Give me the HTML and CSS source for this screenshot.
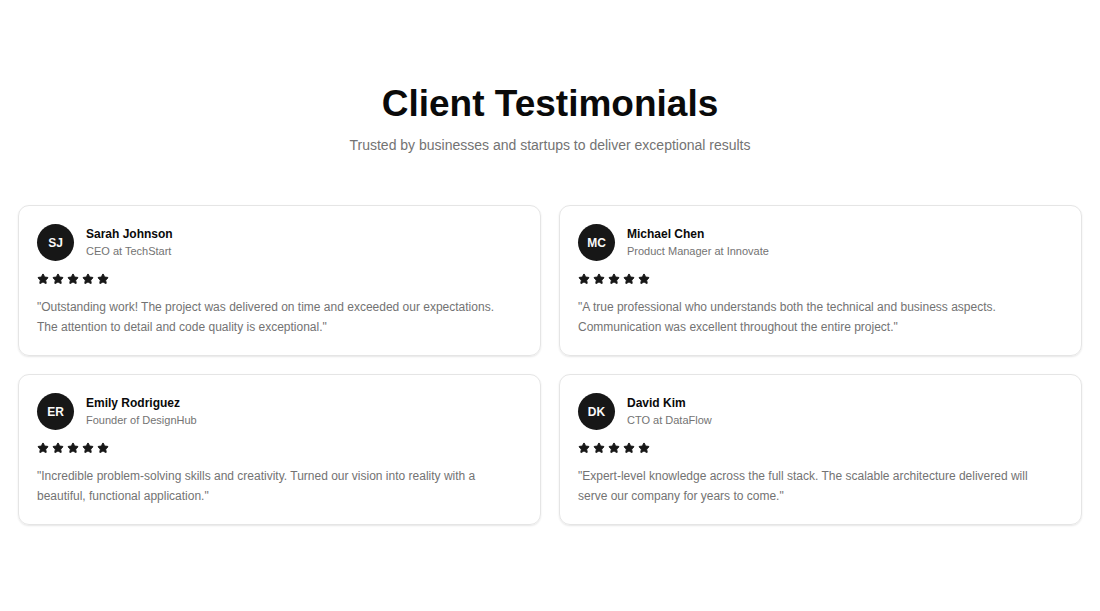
FILE: index.html
```html
<!DOCTYPE html>
<html lang="en">
<head>
  <meta charset="UTF-8">
  <meta name="viewport" content="width=device-width, initial-scale=1.0">
  <title>Client Testimonials</title>
  <link rel="stylesheet" href="styles.css">
</head>
<body>
  <svg class="sprite" aria-hidden="true">
    <symbol id="star" viewBox="0 0 24 24">
      <path d="M11.525 2.295a.53.53 0 0 1 .95 0l2.31 4.679a2.123 2.123 0 0 0 1.595 1.16l5.166.756a.53.53 0 0 1 .294.904l-3.736 3.638a2.123 2.123 0 0 0-.611 1.878l.882 5.14a.53.53 0 0 1-.771.56l-4.618-2.428a2.122 2.122 0 0 0-1.973 0L6.396 21.01a.53.53 0 0 1-.77-.56l.881-5.139a2.122 2.122 0 0 0-.611-1.879L2.16 9.795a.53.53 0 0 1 .294-.906l5.165-.755a2.122 2.122 0 0 0 1.597-1.16z"/>
    </symbol>
  </svg>

  <section class="testimonials">
    <div class="heading">
      <h2>Client Testimonials</h2>
      <p>Trusted by businesses and startups to deliver exceptional results</p>
    </div>

    <div class="grid">
      <div class="card">
        <div class="person">
          <div class="avatar">SJ</div>
          <div>
            <h3>Sarah Johnson</h3>
            <p class="role">CEO at TechStart</p>
          </div>
        </div>
        <div class="stars" role="img" aria-label="5 out of 5 stars">
          <svg><use href="#star"/></svg>
          <svg><use href="#star"/></svg>
          <svg><use href="#star"/></svg>
          <svg><use href="#star"/></svg>
          <svg><use href="#star"/></svg>
        </div>
        <p class="quote">"Outstanding work! The project was delivered on time and exceeded our expectations. The attention to detail and code quality is exceptional."</p>
      </div>

      <div class="card">
        <div class="person">
          <div class="avatar">MC</div>
          <div>
            <h3>Michael Chen</h3>
            <p class="role">Product Manager at Innovate</p>
          </div>
        </div>
        <div class="stars" role="img" aria-label="5 out of 5 stars">
          <svg><use href="#star"/></svg>
          <svg><use href="#star"/></svg>
          <svg><use href="#star"/></svg>
          <svg><use href="#star"/></svg>
          <svg><use href="#star"/></svg>
        </div>
        <p class="quote">"A true professional who understands both the technical and business aspects. Communication was excellent throughout the entire project."</p>
      </div>

      <div class="card">
        <div class="person">
          <div class="avatar">ER</div>
          <div>
            <h3>Emily Rodriguez</h3>
            <p class="role">Founder of DesignHub</p>
          </div>
        </div>
        <div class="stars" role="img" aria-label="5 out of 5 stars">
          <svg><use href="#star"/></svg>
          <svg><use href="#star"/></svg>
          <svg><use href="#star"/></svg>
          <svg><use href="#star"/></svg>
          <svg><use href="#star"/></svg>
        </div>
        <p class="quote">"Incredible problem-solving skills and creativity. Turned our vision into reality with a beautiful, functional application."</p>
      </div>

      <div class="card">
        <div class="person">
          <div class="avatar">DK</div>
          <div>
            <h3>David Kim</h3>
            <p class="role">CTO at DataFlow</p>
          </div>
        </div>
        <div class="stars" role="img" aria-label="5 out of 5 stars">
          <svg><use href="#star"/></svg>
          <svg><use href="#star"/></svg>
          <svg><use href="#star"/></svg>
          <svg><use href="#star"/></svg>
          <svg><use href="#star"/></svg>
        </div>
        <p class="quote">"Expert-level knowledge across the full stack. The scalable architecture delivered will serve our company for years to come."</p>
      </div>
    </div>
  </section>
</body>
</html>
```
FILE: styles.css
```css
* {
  box-sizing: border-box;
}
body {
  margin: 0;
  font-family: "Liberation Sans", Arial, sans-serif;
  font-size: 12px;
  line-height: 20px;
  color: #0a0a0a;
  background-color: #fff;
}
h2, h3, p {
  margin: 0;
}
.sprite {
  display: none;
}
.testimonials {
  padding: 80px 18px;
}
.heading {
  text-align: center;
  margin-bottom: 48px;
}
.heading h2 {
  font-size: 37px;
  line-height: 48px;
  margin-bottom: 6px;
}
.heading p {
  font-size: 14px;
  line-height: 23px;
  color: #737373;
}
.grid {
  display: grid;
  grid-template-columns: 1fr 1fr;
  gap: 18px;
}
.card {
  padding: 18px;
  border: 1px solid #e5e5e5;
  border-radius: 11px;
  box-shadow: 0 1px 2px rgba(0, 0, 0, 0.1);
}
.person {
  display: flex;
  align-items: center;
  gap: 12px;
  margin-bottom: 12px;
}
.avatar {
  display: flex;
  align-items: center;
  justify-content: center;
  width: 37px;
  height: 37px;
  border-radius: 50%;
  background-color: #171717;
  color: #fafafa;
  font-weight: bold;
}
.person h3 {
  font-size: 12px;
  line-height: 18px;
}
.role {
  font-size: 11px;
  line-height: 17px;
  color: #737373;
}
.stars {
  display: flex;
  gap: 3px;
  margin-bottom: 12px;
}
.stars svg {
  width: 12px;
  height: 12px;
  fill: #171717;
  stroke: #171717;
  stroke-width: 2;
  stroke-linejoin: round;
}
.quote {
  padding-right: 12px;
  color: #737373;
}
```
